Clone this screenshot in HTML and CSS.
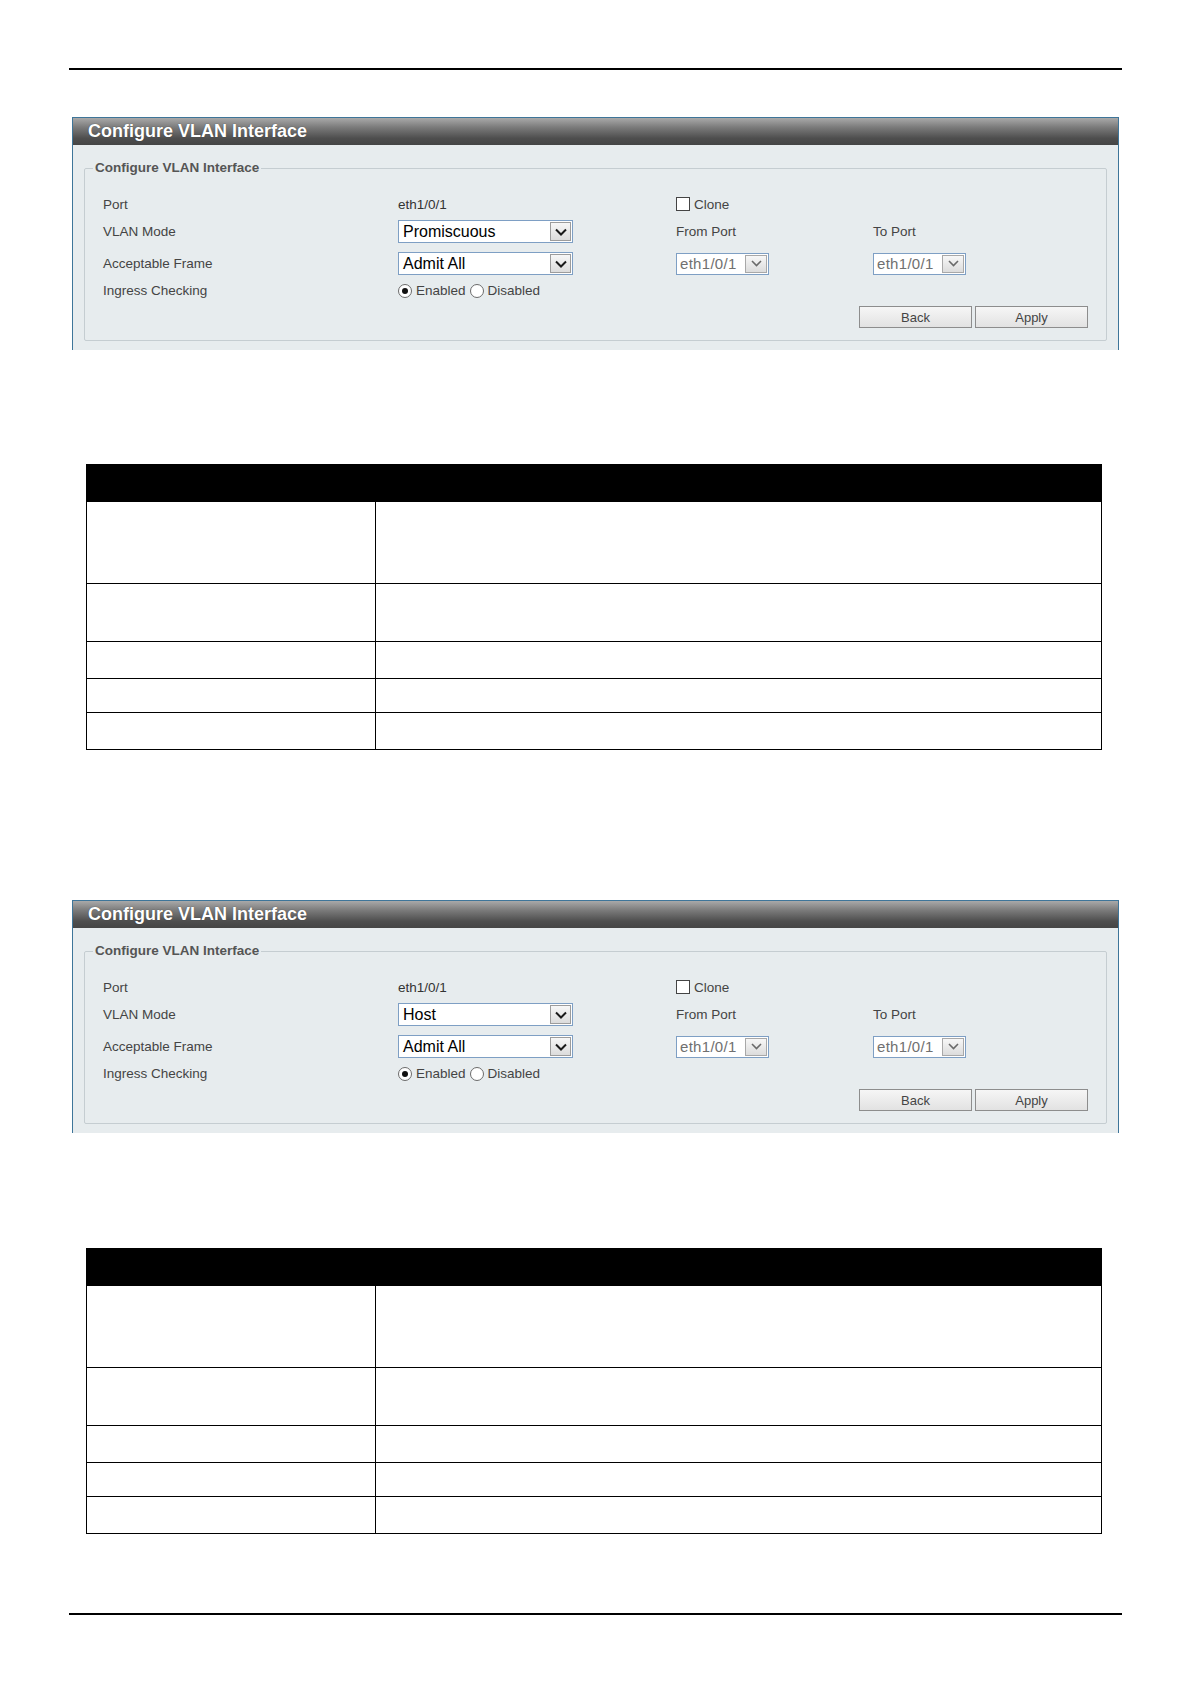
FILE: index.html
```html
<!DOCTYPE html>
<html lang="en">
<head>
    <meta charset="UTF-8">
    <meta name="viewport" content="width=device-width, initial-scale=1.0">
    <title>Configure VLAN Interface</title>
    <link rel="stylesheet" href="styles.css">
</head>
<body>
    <div class="page">
        <div class="rule"></div>

        <!-- promiscuous -->
        <div class="panel">
            <div class="panel-title">Configure VLAN Interface</div>
            <div class="panel-body">
                <fieldset class="box">
                    <legend>Configure VLAN Interface</legend>
                    <div class="form-grid">
                        <div class="lbl">Port</div>
                        <div class="val">eth1/0/1</div>
                        <div class="inline"><span class="check"></span>Clone</div>
                        <div></div>

                        <div class="lbl">VLAN Mode</div>
                        <div>
                            <div class="select">
                                <span>Promiscuous</span>
                                <span class="drop"><svg width="12" height="8" viewBox="0 0 12 8"><path d="M1 1.5 6 6.5 11 1.5" fill="none" stroke="#1a1a1a" stroke-width="2"/></svg></span>
                            </div>
                        </div>
                        <div class="lbl">From Port</div>
                        <div class="lbl">To Port</div>

                        <div class="lbl">Acceptable Frame</div>
                        <div>
                            <div class="select">
                                <span>Admit All</span>
                                <span class="drop"><svg width="12" height="8" viewBox="0 0 12 8"><path d="M1 1.5 6 6.5 11 1.5" fill="none" stroke="#1a1a1a" stroke-width="2"/></svg></span>
                            </div>
                        </div>
                        <div>
                            <div class="select small">
                                <span>eth1/0/1</span>
                                <span class="drop"><svg width="11" height="7" viewBox="0 0 11 7"><path d="M1 1 5.5 5.5 10 1" fill="none" stroke="#6a6a6a" stroke-width="1.6"/></svg></span>
                            </div>
                        </div>
                        <div>
                            <div class="select small">
                                <span>eth1/0/1</span>
                                <span class="drop"><svg width="11" height="7" viewBox="0 0 11 7"><path d="M1 1 5.5 5.5 10 1" fill="none" stroke="#6a6a6a" stroke-width="1.6"/></svg></span>
                            </div>
                        </div>

                        <div class="lbl">Ingress Checking</div>
                        <div class="inline">
                            <span class="radio on"></span>Enabled
                            <span class="radio"></span>Disabled
                        </div>
                        <div></div>
                        <div></div>
                    </div>
                    <div class="btns">
                        <button type="button" class="btn">Back</button>
                        <button type="button" class="btn">Apply</button>
                    </div>
                </fieldset>
            </div>
        </div>

        <table class="desc">
            <tr class="head"><td class="c1"></td><td></td></tr>
            <tr class="r1"><td class="c1"></td><td></td></tr>
            <tr class="r2"><td class="c1"></td><td></td></tr>
            <tr class="r3"><td class="c1"></td><td></td></tr>
            <tr class="r4"><td class="c1"></td><td></td></tr>
            <tr class="r5"><td class="c1"></td><td></td></tr>
        </table>

        <!-- host -->
        <div class="panel second">
            <div class="panel-title">Configure VLAN Interface</div>
            <div class="panel-body">
                <fieldset class="box">
                    <legend>Configure VLAN Interface</legend>
                    <div class="form-grid">
                        <div class="lbl">Port</div>
                        <div class="val">eth1/0/1</div>
                        <div class="inline"><span class="check"></span>Clone</div>
                        <div></div>

                        <div class="lbl">VLAN Mode</div>
                        <div>
                            <div class="select">
                                <span>Host</span>
                                <span class="drop"><svg width="12" height="8" viewBox="0 0 12 8"><path d="M1 1.5 6 6.5 11 1.5" fill="none" stroke="#1a1a1a" stroke-width="2"/></svg></span>
                            </div>
                        </div>
                        <div class="lbl">From Port</div>
                        <div class="lbl">To Port</div>

                        <div class="lbl">Acceptable Frame</div>
                        <div>
                            <div class="select">
                                <span>Admit All</span>
                                <span class="drop"><svg width="12" height="8" viewBox="0 0 12 8"><path d="M1 1.5 6 6.5 11 1.5" fill="none" stroke="#1a1a1a" stroke-width="2"/></svg></span>
                            </div>
                        </div>
                        <div>
                            <div class="select small">
                                <span>eth1/0/1</span>
                                <span class="drop"><svg width="11" height="7" viewBox="0 0 11 7"><path d="M1 1 5.5 5.5 10 1" fill="none" stroke="#6a6a6a" stroke-width="1.6"/></svg></span>
                            </div>
                        </div>
                        <div>
                            <div class="select small">
                                <span>eth1/0/1</span>
                                <span class="drop"><svg width="11" height="7" viewBox="0 0 11 7"><path d="M1 1 5.5 5.5 10 1" fill="none" stroke="#6a6a6a" stroke-width="1.6"/></svg></span>
                            </div>
                        </div>

                        <div class="lbl">Ingress Checking</div>
                        <div class="inline">
                            <span class="radio on"></span>Enabled
                            <span class="radio"></span>Disabled
                        </div>
                        <div></div>
                        <div></div>
                    </div>
                    <div class="btns">
                        <button type="button" class="btn">Back</button>
                        <button type="button" class="btn">Apply</button>
                    </div>
                </fieldset>
            </div>
        </div>

        <table class="desc">
            <tr class="head"><td class="c1"></td><td></td></tr>
            <tr class="r1"><td class="c1"></td><td></td></tr>
            <tr class="r2"><td class="c1"></td><td></td></tr>
            <tr class="r3"><td class="c1"></td><td></td></tr>
            <tr class="r4"><td class="c1"></td><td></td></tr>
            <tr class="r5"><td class="c1"></td><td></td></tr>
        </table>

        <div class="rule bottom"></div>
    </div>
</body>
</html>
```

FILE: styles.css
```css
body {
    margin: 0;
    background-color: #fff;
    font-family: "Liberation Sans", Arial, sans-serif;
}

.page {
    padding: 68px 0 40px 69px;
}

.rule {
    width: 1053px;
    height: 2px;
    background-color: #000;
}

.rule.bottom {
    margin-top: 79px;
}

/* panel */

.panel {
    width: 1047px;
    margin: 47px 0 0 3px;
    box-sizing: border-box;
    border: 1px solid #3e7599;
    border-bottom: none;
    background-color: #e7ecee;
}

.panel.second {
    margin-top: 150px;
}

.panel-title {
    height: 27px;
    line-height: 27px;
    padding-left: 15px;
    font-size: 18px;
    font-weight: bold;
    color: #fff;
    background: linear-gradient(#a9a9a9, #7a7a7a 35%, #4e4e4e 75%, #454545);
    text-shadow: 0 0 1px #333;
}

.panel-body {
    padding: 15px 11px 9px 11px;
}

.box {
    margin: 0;
    padding: 15px 18px 12px 8px;
    border: 1px solid #c5cdd1;
    border-radius: 2px;
    min-inline-size: 0;
}

.box legend {
    padding: 0 2px;
    font-size: 13.5px;
    line-height: 16px;
    font-weight: bold;
    color: #555;
}

.form-grid {
    display: grid;
    grid-template-columns: 295px 278px 197px 1fr;
    grid-template-rows: 26px 29px 35px 19px;
    align-items: center;
    padding-left: 10px;
    font-size: 13.5px;
    color: #444;
}

.val {
    color: #333;
}

.inline {
    display: flex;
    align-items: center;
}

.check {
    width: 12px;
    height: 12px;
    border: 1px solid #444;
    background-color: #fff;
    margin-right: 4px;
}

.radio {
    position: relative;
    width: 12px;
    height: 12px;
    border: 1px solid #6b6b6b;
    border-radius: 50%;
    background-color: #fff;
    margin-right: 4px;
}

.inline .radio:not(:first-child) {
    margin-left: 4px;
}

.radio.on::after {
    content: "";
    position: absolute;
    left: 3px;
    top: 3px;
    width: 6px;
    height: 6px;
    border-radius: 50%;
    background-color: #111;
}

/* fake selects */

.select {
    display: flex;
    align-items: center;
    justify-content: space-between;
    box-sizing: border-box;
    width: 175px;
    height: 23px;
    padding: 0 1px 0 4px;
    border: 1px solid #7e9fc4;
    background-color: #fff;
    font-size: 16px;
    color: #000;
}

.drop {
    display: flex;
    align-items: center;
    justify-content: center;
    box-sizing: border-box;
    width: 21px;
    height: 19px;
    border: 1px solid #9c9c9c;
    background: linear-gradient(#f7f7f7, #dcdcdc);
}

.select.small {
    width: 93px;
    height: 22px;
    padding: 0 1px 0 3px;
    font-size: 15px;
    letter-spacing: 0.3px;
    color: #707070;
}

.select.small .drop {
    width: 22px;
    height: 18px;
    border-color: #a8a8a8;
}

/* buttons */

.btns {
    display: flex;
    justify-content: flex-end;
    gap: 3px;
    margin-top: 6px;
}

.btn {
    width: 113px;
    height: 22px;
    padding: 0;
    border: 1px solid #8d8d8d;
    background: linear-gradient(#f6f6f6, #e2e2e2);
    font-family: "Liberation Sans", Arial, sans-serif;
    font-size: 13px;
    color: #444;
}

/* description tables */

.desc {
    width: 1016px;
    margin: 114px 0 0 17px;
    border-collapse: collapse;
}

.desc td {
    border: 1px solid #000;
    padding: 0;
}

.desc .c1 {
    width: 288px;
}

.desc .head td {
    background-color: #000;
    height: 36px;
}

.desc .r1 td { height: 81px; }
.desc .r2 td { height: 57px; }
.desc .r3 td { height: 36px; }
.desc .r4 td { height: 33px; }
.desc .r5 td { height: 36px; }

.panel.second + .desc {
    margin-top: 115px;
}
```
